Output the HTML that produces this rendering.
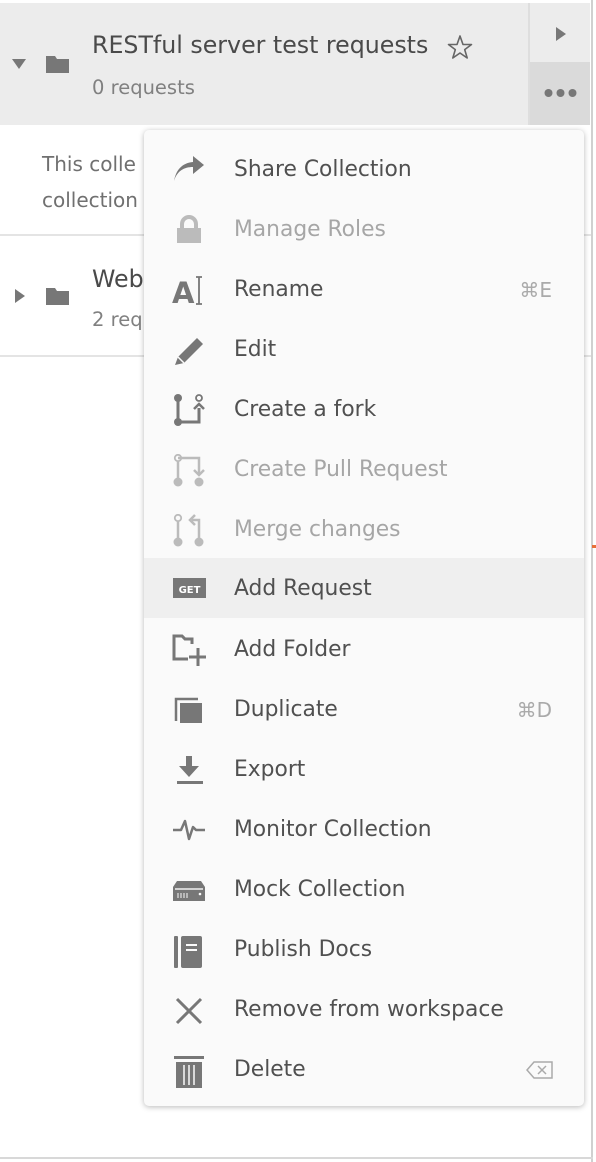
<!DOCTYPE html>
<html><head><meta charset="utf-8"><style>
*{margin:0;padding:0;box-sizing:border-box}
body{width:596px;height:1162px;background:#fff;font-family:"DejaVu Sans","Liberation Sans",sans-serif;position:relative;overflow:hidden;color:#505050}
.abs{position:absolute}
.menu{position:absolute;left:144px;top:130px;width:440px;height:976px;background:#fafafa;border-radius:5px;box-shadow:0 1px 6px rgba(0,0,0,.28)}
.it{position:absolute;left:0;width:440px;height:60px}
.it .t{position:absolute;left:90px;top:0;line-height:60px;font-size:21.8px;color:#505050}
.it.d .t{color:#a6a6a6}
.it svg{position:absolute;left:28px;top:14px}
.it .k{position:absolute;right:32px;top:0;line-height:60px;font-size:20px;color:#aaa}
</style></head><body>
<div class="abs" style="left:0;top:3px;width:528px;height:122px;background:#ececec"></div>
<div class="abs" style="left:528px;top:3px;width:2px;height:122px;background:#dedede"></div>
<div class="abs" style="left:530px;top:3px;width:60px;height:59px;background:#ececec"></div>
<div class="abs" style="left:530px;top:62px;width:60px;height:63px;background:#dadada"></div>
<div class="abs" style="left:591px;top:0;width:2px;height:1162px;background:#d0d0d0"></div>
<div class="abs" style="left:0;top:1157px;width:593px;height:2px;background:#d8d8d8"></div>
<div class="abs" style="left:592px;top:545px;width:4px;height:3px;background:#e8703a"></div>
<svg class="abs" style="left:555px;top:26px" width="12" height="16"><path d="M1 1L11 8L1 15Z" fill="#777"/></svg>
<svg class="abs" style="left:544px;top:88px" width="34" height="10"><circle cx="4.5" cy="5" r="4" fill="#777"/><circle cx="16.5" cy="5" r="4" fill="#777"/><circle cx="28.5" cy="5" r="4" fill="#777"/></svg>
<svg class="abs" style="left:11px;top:58px" width="16" height="12"><path d="M1 1H15L8 11Z" fill="#777"/></svg>
<svg class="abs" style="left:45px;top:54px" width="26" height="20"><path d="M1 2H10L12 5H24V19H1Z" fill="#777"/></svg>
<div class="abs" style="left:92px;top:31px;font-size:23.7px;color:#4a4a4a">RESTful server test requests</div>
<svg class="abs" style="left:447px;top:34px" width="26" height="26"><path d="M13 2L16 10.5H24.5L17.7 15.6L20.2 24L13 19L5.8 24L8.3 15.6L1.5 10.5H10Z" fill="none" stroke="#666" stroke-width="1.6" stroke-linejoin="round"/></svg>
<div class="abs" style="left:92px;top:76px;font-size:19.5px;color:#808080">0 requests</div>
<div class="abs" style="left:42px;top:146px;font-size:20px;color:#707070;line-height:36px">This colle<br>collection</div>
<div class="abs" style="left:0;top:234px;width:591px;height:2px;background:#e4e4e4"></div>
<svg class="abs" style="left:14px;top:288px" width="12" height="16"><path d="M1 1L11 8L1 15Z" fill="#777"/></svg>
<svg class="abs" style="left:45px;top:286px" width="26" height="20"><path d="M1 2H10L12 5H24V19H1Z" fill="#777"/></svg>
<div class="abs" style="left:92px;top:265px;font-size:23.7px;color:#4a4a4a">Web</div>
<div class="abs" style="left:92px;top:308px;font-size:19.5px;color:#808080">2 req</div>
<div class="abs" style="left:0;top:355px;width:591px;height:2px;background:#e4e4e4"></div>

<div class="menu">
<div class="it" style="top:10px"><svg width="34" height="32"><path d="M2 27C5 17 12 13 21 13V20L32 11L21 2V8C10 9 4 16 2 27Z" fill="#777"/></svg><span class="t">Share Collection</span></div>
<div class="it d" style="top:70px"><svg width="34" height="32"><path d="M10 14V10A7 7 0 0 1 24 10V14" fill="none" stroke="#bbb" stroke-width="4"/><rect x="5" y="14" width="24" height="15" fill="#bbb"/></svg><span class="t">Manage Roles</span></div>
<div class="it" style="top:130px"><svg width="34" height="34"><text x="0" y="29" font-family="DejaVu Sans" font-weight="bold" font-size="29" fill="#777">A</text><path d="M24 3H30M27 3V30M24 30H30" stroke="#777" stroke-width="1.8" fill="none"/></svg><span class="t">Rename</span><span class="k">⌘E</span></div>
<div class="it" style="top:190px"><svg width="34" height="32"><path d="M3 31L6 23L25 4L31 10L12 29Z" fill="#777"/><path d="M6 23L12 29" stroke="#fafafa" stroke-width="1.5"/></svg><span class="t">Edit</span></div>
<div class="it" style="top:250px"><svg width="34" height="34"><circle cx="6" cy="4" r="4" fill="#777"/><circle cx="6" cy="28" r="4" fill="#777"/><path d="M6 4V28H27V14" stroke="#777" stroke-width="3" fill="none"/><circle cx="27" cy="4" r="3" fill="none" stroke="#777" stroke-width="1.8"/><path d="M22 15L27 10L32 15" stroke="#777" stroke-width="2.5" fill="none"/></svg><span class="t">Create a fork</span></div>
<div class="it d" style="top:310px"><svg width="34" height="34"><circle cx="6" cy="4" r="3.2" fill="none" stroke="#bbb" stroke-width="1.8"/><path d="M6 8V28" stroke="#bbb" stroke-width="2.5"/><path d="M6 4H27V20" stroke="#bbb" stroke-width="2.5" fill="none"/><path d="M22 16L27 21L32 16" stroke="#bbb" stroke-width="2.5" fill="none"/><circle cx="6" cy="28" r="4.5" fill="#bbb"/><circle cx="27" cy="28" r="4.5" fill="#bbb"/></svg><span class="t">Create Pull Request</span></div>
<div class="it d" style="top:370px"><svg width="34" height="34"><circle cx="6" cy="4" r="3.2" fill="none" stroke="#bbb" stroke-width="1.8"/><path d="M6 8V28" stroke="#bbb" stroke-width="2.5"/><path d="M27 28V6H20" stroke="#bbb" stroke-width="2.5" fill="none"/><path d="M23 1L18 6L23 11" stroke="#bbb" stroke-width="2.5" fill="none"/><circle cx="6" cy="28" r="4.5" fill="#bbb"/><circle cx="27" cy="28" r="4.5" fill="#bbb"/></svg><span class="t">Merge changes</span></div>
<div class="it" style="top:428px;background:#efefef"><svg width="34" height="32" style="top:14px"><rect x="1" y="6" width="33" height="20" fill="#777"/><text x="17.5" y="21" text-anchor="middle" font-family="DejaVu Sans" font-weight="bold" font-size="10" fill="#fff">GET</text></svg><span class="t" style="line-height:62px">Add Request</span></div>
<div class="it" style="top:490px"><svg width="34" height="34"><path d="M16 25H2V2H10L13 5H20V10" stroke="#777" stroke-width="3" fill="none"/><path d="M26 14V32M17 23H35" stroke="#777" stroke-width="3"/></svg><span class="t">Add Folder</span></div>
<div class="it" style="top:550px"><svg width="34" height="32"><path d="M4 27V5H26" stroke="#777" stroke-width="2.5" fill="none"/><rect x="8" y="9" width="22" height="20" fill="#777"/></svg><span class="t">Duplicate</span><span class="k">⌘D</span></div>
<div class="it" style="top:610px"><svg width="34" height="34"><path d="M14 2H20V12H27L17 23L7 12H14Z" fill="#777"/><rect x="5" y="27" width="26" height="3" fill="#777"/></svg><span class="t">Export</span></div>
<div class="it" style="top:670px"><svg width="34" height="32"><path d="M1 16H9L13 7L17 25L21 13L24 16H33" stroke="#777" stroke-width="2.5" fill="none" stroke-linejoin="round"/></svg><span class="t">Monitor Collection</span></div>
<div class="it" style="top:730px"><svg width="34" height="32"><path d="M5 7H29L33 13V27H1V13Z" fill="#777"/><rect x="3" y="14" width="28" height="2" fill="#fafafa" opacity=".7"/><path d="M6 19V24M9 19V24M12 19V24M15 19V24" stroke="#fafafa" stroke-width="1"/><circle cx="28" cy="20" r="1.3" fill="#fafafa"/></svg><span class="t">Mock Collection</span></div>
<div class="it" style="top:790px"><svg width="34" height="34"><rect x="2" y="2" width="4" height="32" rx="1" fill="#777"/><rect x="9" y="2" width="21" height="32" rx="2" fill="#777"/><rect x="14" y="10" width="11" height="2" fill="#fafafa"/><rect x="14" y="15" width="11" height="2" fill="#fafafa"/></svg><span class="t">Publish Docs</span></div>
<div class="it" style="top:850px"><svg width="34" height="32"><path d="M5 5L29 29M29 5L5 29" stroke="#777" stroke-width="3"/></svg><span class="t">Remove from workspace</span></div>
<div class="it" style="top:910px"><svg width="34" height="36"><rect x="2" y="2" width="30" height="3" fill="#777"/><rect x="4" y="8" width="26" height="26" fill="#777"/><path d="M12 11V31M17 11V31M22 11V31" stroke="#fafafa" stroke-width="1.5"/></svg><span class="t">Delete</span><svg width="28" height="20" style="left:382px;top:20px"><path d="M8 2H26V18H8L1 10Z" fill="none" stroke="#aaa" stroke-width="1.5"/><path d="M12 6L20 14M20 6L12 14" stroke="#aaa" stroke-width="1.5"/></svg></div>
</div>
</body></html>
